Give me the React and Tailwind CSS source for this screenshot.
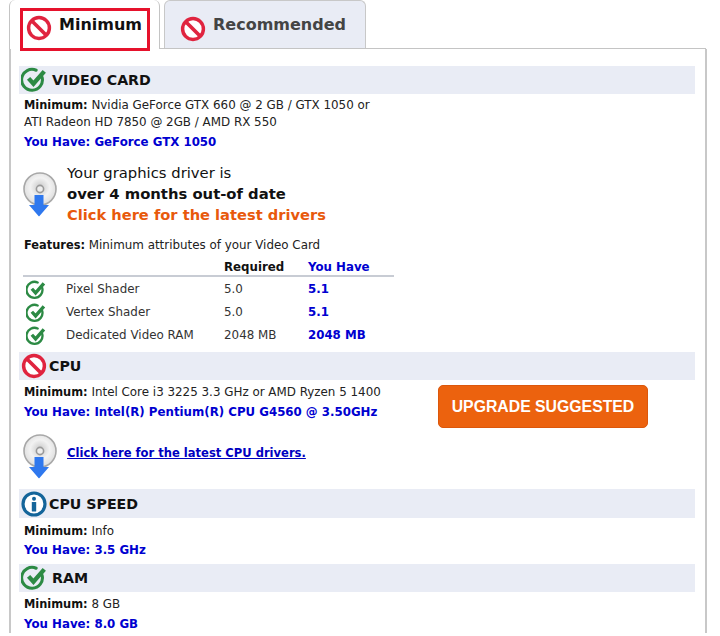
const Ban = ({ size = 24 }) => (
  <svg width={size} height={size} viewBox="0 0 24 24" className="shrink-0">
    <circle cx="12" cy="12" r="9.6" fill="white" stroke="#e0243f" strokeWidth="3.2" />
    <path d="M5.5 5.5 L18.5 18.5" stroke="#e0243f" strokeWidth="3.4" />
  </svg>
);

const Check = ({ size = 24 }) => (
  <svg width={size} height={size} viewBox="0 0 24 24" className="shrink-0">
    <path d="M19.5 9.5 A9.6 9.6 0 1 1 14 3" fill="none" stroke="#2c8a44" strokeWidth="2.8" strokeLinecap="round" />
    <path d="M7 10.5 L11.5 15.5 L21.5 4" fill="none" stroke="#2c8a44" strokeWidth="4" />
  </svg>
);

const Info = () => (
  <svg width="26" height="26" viewBox="0 0 26 26" className="shrink-0">
    <circle cx="13" cy="13" r="11" fill="white" stroke="#14659a" strokeWidth="3.2" />
    <circle cx="13" cy="7.8" r="2" fill="#14659a" />
    <rect x="10.8" y="11" width="4.4" height="9.5" rx="0.6" fill="#14659a" />
  </svg>
);

const Disc = () => (
  <svg width="36" height="46" viewBox="0 0 36 46" className="shrink-0">
    <defs>
      <radialGradient id="disc" cx="50%" cy="45%" r="55%">
        <stop offset="0%" stopColor="#c8c8c8" />
        <stop offset="55%" stopColor="#f2f2f2" />
        <stop offset="100%" stopColor="#dddddd" />
      </radialGradient>
    </defs>
    <circle cx="17" cy="17" r="16" fill="url(#disc)" stroke="#a8a8a8" strokeWidth="1.6" />
    <circle cx="17" cy="17" r="3.6" fill="#eeeeee" stroke="#999999" strokeWidth="1.6" />
    <path d="M11.5 23 H20.5 V33 H26 L16.5 44 Q16 44.5 15.5 44 L6 33 H11.5 Z" fill="#2f78ee" />
  </svg>
);

const Bar = ({ icon, title, gap, tall }) => (
  <div className={`flex items-center bg-[#e9ecf5] pl-[2px] ${gap} ${tall ? "h-[29px]" : "h-[28px]"}`}>
    {icon}
    <span className="mt-[2px] text-[14.2px] font-bold text-[#111]">{title}</span>
  </div>
);

const Min = ({ children }) => (
  <div className="text-[11.9px] leading-[17px] text-[#222]">
    <b className="text-[11.4px] text-[#111]">Minimum:</b> {children}
  </div>
);

const Have = ({ children }) => (
  <div className="text-[11.8px] font-bold leading-[18px] text-[#0000d0]">You Have: {children}</div>
);

const rows = [
  ["Pixel Shader", "5.0", "5.1"],
  ["Vertex Shader", "5.0", "5.1"],
  ["Dedicated Video RAM", "2048 MB", "2048 MB"],
];

const App = () => {
  return (
    <div className="h-[636px] w-[720px] overflow-hidden bg-white font-['DejaVu_Sans',Verdana,sans-serif]">
      <div className="ml-[9px] flex h-[49px] w-[697px] border-b border-[#c4c4c4]">
        <div className="h-[49px] w-[151px] rounded-t-[6px] border-x border-[#c4c4c4] bg-white pl-[10px] pt-[8px]">
          <div className="flex h-[43px] w-[130px] items-start border-[3px] border-[#e6122c] bg-white pl-[3px]">
            <span className="mt-[4px]"><Ban size={26} /></span>
            <span className="ml-[7px] mt-[2px] text-[16px] font-bold text-[#111]">Minimum</span>
          </div>
        </div>
        <div className="ml-[4px] flex h-[48px] w-[202px] items-start rounded-t-[6px] border-x border-t border-[#c8c8c8] bg-[#e9ecf5] pl-[15px] pt-[15px]">
          <Ban size={26} />
          <span className="ml-[7px] -mt-[3px] text-[16px] font-bold text-[#444]">Recommended</span>
        </div>
      </div>

      <div className="ml-[9px] w-[698px] border-x-2 border-[#c8c8c8] pl-[8px] pr-[10px] pt-[17px]">
        <Bar icon={<Check size={26} />} title="VIDEO CARD" gap="gap-[5px]" />
        <div className="pl-[5px]">
          <div className="mt-[3px]">
            <Min>Nvidia GeForce GTX 660 @ 2 GB / GTX 1050 or<br />ATI Radeon HD 7850 @ 2GB / AMD RX 550</Min>
          </div>
          <div className="mt-[2px]"><Have>GeForce GTX 1050</Have></div>

          <div className="mt-[11px] flex items-center">
            <div className="-ml-[1px] mt-[3px]"><Disc /></div>
            <div className="ml-[8px] text-[14.8px] leading-[21px] text-[#111]">
              <div>Your graphics driver is</div>
              <div className="font-bold">over 4 months out-of date</div>
              <div className="text-[14.65px] font-bold text-[#e8590c]">Click here for the latest drivers</div>
            </div>
          </div>

          <div className="mt-[11px] text-[11.9px] leading-[18px] text-[#222]">
            <b className="text-[11.4px] text-[#111]">Features:</b> Minimum attributes of your Video Card
          </div>
          <div className="-ml-[1px] w-[371px]">
            <div className="mt-[3px] flex h-[20px] items-end border-b-2 border-[#c8ccd4] pb-px text-[11.8px] font-bold leading-[14px]">
              <span className="ml-[201px] w-[84px] text-[#111]">Required</span>
              <span className="text-[#0000d0]">You Have</span>
            </div>
            <div className="pt-[1px]">
              {rows.map((r) => (
                <div key={r[0]} className="flex h-[23px] items-center text-[11.9px] text-[#333]">
                  <span className="ml-[3px] w-[40px]"><Check size={20} /></span>
                  <span className="w-[158px]">{r[0]}</span>
                  <span className="w-[84px]">{r[1]}</span>
                  <span className="text-[11.8px] font-bold text-[#0000d0]">{r[2]}</span>
                </div>
              ))}
            </div>
          </div>
        </div>

        <div className="mt-[5px]"><Bar icon={<Ban size={26} />} title="CPU" gap="gap-[2px]" /></div>
        <div className="flex pl-[5px]">
          <div className="mt-[4px] w-[414px]">
            <Min>Intel Core i3 3225 3.3 GHz or AMD Ryzen 5 1400</Min>
            <div className="mt-[2px]"><Have>Intel(R) Pentium(R) CPU G4560 @ 3.50GHz</Have></div>
          </div>
          <div className="mt-[5px] flex h-[43px] w-[210px] items-center justify-center rounded-[5px] border border-[#dc570b] bg-[#ec620e] font-['Liberation_Sans',Arial,sans-serif] text-[15.8px] font-bold text-white">
            UPGRADE SUGGESTED
          </div>
        </div>
        <div className="mt-[6px] flex items-center pl-[4px]">
          <Disc />
          <a className="ml-[8px] -mt-[7px] text-[11.55px] font-bold text-[#0000c0] underline">Click here for the latest CPU drivers.</a>
        </div>

        <div className="mt-[9px]"><Bar icon={<Info />} title="CPU SPEED" gap="gap-[2px]" tall /></div>
        <div className="mt-[5px] pl-[5px]">
          <Min>Info</Min>
          <div className="mt-[1px]"><Have>3.5 GHz</Have></div>
        </div>

        <div className="mt-[5px]"><Bar icon={<Check size={26} />} title="RAM" gap="gap-[5px]" /></div>
        <div className="mt-[4px] pl-[5px]">
          <Min>8 GB</Min>
          <div className="mt-[2px]"><Have>8.0 GB</Have></div>
        </div>
      </div>
    </div>
  );
};

export default App;
